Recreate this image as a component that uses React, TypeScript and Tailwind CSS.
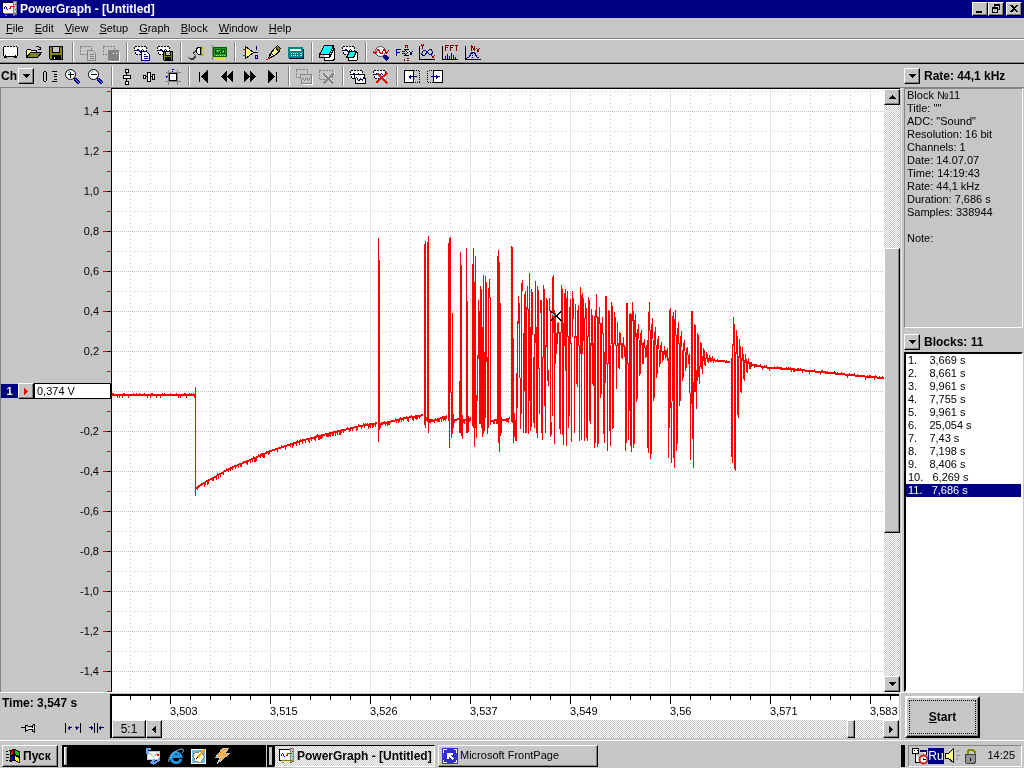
import type { ReactNode } from "react";
import clsx from "clsx";

type Span = [top: number, bottom: number];

const raised =
  "border border-t-white border-l-white border-r-black border-b-black bg-[#c6c6c6] shadow-[inset_-1px_-1px_#808080]";
const dither =
  "bg-[repeating-conic-gradient(#fff_0_25%,#c6c6c6_0_50%)] bg-[length:2px_2px]";

const menus = ["File", "Edit", "View", "Setup", "Graph", "Block", "Window", "Help"];

const yLabels = [
  "1,4", "1,2", "1,0", "0,8", "0,6", "0,4", "0,2", "",
  "-0,2", "-0,4", "-0,6", "-0,8", "-1,0", "-1,2", "-1,4",
];
const xLabels = ["3,503", "3,515", "3,526", "3,537", "3,549", "3,56", "3,571", "3,583"];

const info = [
  "Block №11",
  'Title: ""',
  'ADC: "Sound"',
  "Resolution: 16 bit",
  "Channels: 1",
  "Date: 14.07.07",
  "Time: 14:19:43",
  "Rate: 44,1 kHz",
  "Duration: 7,686 s",
  "Samples: 338944",
];

const blocks = [
  "3,669", "8,661", "9,961", "7,755", "9,961", "25,054",
  "7,43", "7,198", "8,406", "6,269", "7,686",
];

/* ---------- signal ---------- */

// quiet stretches, joined by straight lines
const baseline: [number, number][][] = [
  [[112, 394], [195, 394]],
  [[196, 487], [205, 481], [216, 475], [230, 467], [240, 463], [270, 450], [300, 440], [330, 432], [360, 425], [377, 422]],
  [[380, 423], [400, 418], [423, 414]],
  [[426, 417], [432, 420], [447, 415]],
  [[453, 419], [459, 418]],
  [[463, 419], [471, 417]],
  [[490, 420], [497, 419]],
  [[500, 420], [510, 417]],
  [[709, 359], [730, 361]],
  [[752, 364], [770, 367], [790, 368], [830, 372], [870, 376], [884, 377]],
];

// one [top, bottom] pair for each pixel column
const bursts: { x: number; cols: Span[] }[] = [
  { x: 195, cols: [[387, 495]] },
  { x: 378, cols: [[238, 441], [260, 429]] },
  { x: 424, cols: [[244, 424], [241, 427]] },
  { x: 427, cols: [[242, 420], [236, 432]] },
  { x: 448, cols: [[243, 420], [238, 447], [237, 392], [392, 437], [313, 433], [414, 427]] },
  { x: 459, cols: [[381, 432], [252, 432], [265, 435], [415, 438]] },
  { x: 466, cols: [[248, 432], [301, 432], [416, 431]] },
  {
    x: 472,
    cols: [
      [264, 425], [248, 427], [282, 446], [256, 427], [395, 437], [355, 400],
      [300, 358], [311, 423], [286, 423], [289, 427], [327, 436], [275, 433],
      [352, 430], [276, 417], [282, 361], [357, 433], [288, 427], [279, 297],
      [297, 424],
    ],
  },
  { x: 497, cols: [[256, 423], [250, 442], [262, 451], [303, 435], [417, 432]] },
  {
    x: 511,
    cols: [
      [246, 421], [247, 422], [338, 442], [413, 436], [420, 440], [373, 440],
      [321, 407], [296, 323], [303, 377], [378, 428], [283, 413], [280, 290],
      [333, 432], [294, 390], [291, 432], [307, 432], [286, 309], [309, 433],
      [273, 400], [327, 430], [289, 426], [292, 334], [357, 422], [334, 427],
      [281, 342], [327, 432], [286, 437], [290, 368], [368, 413], [300, 312],
      [300, 432], [357, 439], [285, 357], [289, 405], [345, 432], [298, 346],
      [300, 380], [370, 385], [298, 310], [310, 436], [422, 434], [277, 415],
      [275, 332], [310, 443], [313, 363], [333, 353], [323, 343], [322, 333],
      [332, 428], [332, 433], [285, 332], [289, 434], [323, 444], [293, 345],
      [289, 370], [298, 445], [291, 336], [336, 427], [307, 415], [299, 343],
      [343, 441], [291, 336], [298, 318], [336, 432], [304, 337], [336, 383],
      [310, 386], [305, 345], [345, 440], [287, 353], [295, 439], [293, 353],
      [298, 340], [318, 440], [303, 318], [308, 437], [336, 440], [297, 336],
      [300, 420], [343, 423], [309, 345], [315, 383], [343, 385], [316, 447],
      [310, 442], [294, 317], [316, 446], [317, 443], [307, 323], [323, 397],
      [323, 393], [317, 333], [333, 433], [352, 442], [296, 382], [296, 363],
      [363, 450], [310, 363], [311, 430], [345, 445], [302, 343], [306, 428],
      [343, 427], [312, 343], [317, 345], [345, 388], [322, 345], [343, 367],
      [332, 368], [333, 344], [343, 357], [343, 358], [337, 346], [345, 356],
      [347, 450], [303, 442], [303, 363], [363, 439], [314, 410], [313, 445],
      [314, 451], [302, 320], [311, 447], [320, 443], [314, 336], [333, 401],
      [329, 398], [324, 338], [340, 375], [333, 373], [330, 344], [343, 363],
      [342, 363], [339, 347], [347, 357], [345, 356], [340, 447], [312, 452],
      [302, 330], [330, 458], [324, 453], [318, 338], [340, 400], [332, 397],
      [327, 344], [345, 377], [339, 373], [336, 348], [350, 366], [345, 363],
      [342, 351], [351, 361], [351, 359], [346, 354], [350, 358], [350, 356],
      [348, 360], [358, 457], [310, 427], [308, 407], [402, 462], [316, 400],
      [312, 457], [319, 467], [310, 335], [335, 450], [328, 443], [322, 343],
      [343, 405], [336, 400], [331, 346], [350, 380], [343, 377], [340, 350],
      [352, 370], [348, 367], [347, 354], [355, 363], [353, 392], [393, 459],
      [311, 403], [311, 438], [382, 467], [324, 391], [325, 391], [370, 408],
      [333, 380], [335, 376], [366, 383], [342, 366], [343, 368], [356, 373],
      [348, 360], [350, 364], [358, 365], [352, 358], [354, 361], [358, 362],
      [355, 360], [357, 361], [358, 361], [356, 360],
    ],
  },
  {
    x: 731,
    cols: [
      [358, 456], [344, 462], [317, 345], [324, 468], [352, 470], [330, 353],
      [336, 414], [356, 417], [339, 357], [346, 391], [358, 392], [347, 360],
      [354, 378], [360, 380], [354, 362], [359, 371], [361, 372], [358, 363],
      [362, 368], [362, 368], [362, 366],
    ],
  },
];

function noiseAt(x: number) {
  const n = Math.sin(x * 12.9898) * 43758.5453;
  return n - Math.floor(n);
}

function tracePath() {
  let d = "";
  for (const points of baseline) {
    for (let i = 1; i < points.length; i++) {
      const [x0, y0] = points[i - 1];
      const [x1, y1] = points[i];
      for (let x = x0; x < x1; x++) {
        const y = Math.round(y0 + ((y1 - y0) * (x - x0)) / (x1 - x0));
        const noise = noiseAt(x);
        // the recovering part is rougher than the flat ones
        const rough = y0 > 400 ? 2 : 1;
        const top = noise < 0.2 ? y - 1 : y;
        const bottom = y + 2 + (noise > 0.85 ? rough + 1 : noise > 0.6 ? rough : 0);
        d += `M${x} ${top}V${y0 < 400 && noise < 0.9 ? y + 2 : bottom}`;
      }
    }
  }
  for (const { x, cols } of bursts) {
    cols.forEach(([top, bottom], i) => {
      d += `M${x + i} ${top}V${bottom + 1}`;
    });
  }
  return d;
}

const trace = tracePath();

/* ---------- icons ---------- */

function Pix({ children, className = "h-4 w-4" }: { children: ReactNode; className?: string }) {
  return (
    <svg
      viewBox="0 0 16 16"
      className={clsx("shrink-0 overflow-visible", className)}
      fill="none"
      stroke="#000"
      shapeRendering="crispEdges"
      aria-hidden="true"
    >
      <g transform="translate(.5 .5)">{children}</g>
    </svg>
  );
}

const sheet = (
  <>
    <path d="M0 1H12V9H1Z" fill="#fff" stroke="none" />
    <path d="M0 1H12M0 1V5H1V9H6M12 1V5" strokeDasharray="2 1" />
    <path d="M2 6L3 4H4L5 6L6 7L7 5L8 4L10 6" stroke="#000084" />
  </>
);
const glass = (
  <>
    <circle cx="5" cy="5" r="5" fill="#fff" shapeRendering="auto" />
    <path d="M2 4L4 2" stroke="#00c6c6" />
    <path d="M9 9L14 14M10 9L14 13M9 10L13 14" stroke="#000084" strokeWidth="1.5" />
    <path d="M10 10L14 14" stroke="#8484ff" />
  </>
);
const bars = <path d="M0 0V14H15" />;

const icons: Record<string, ReactNode> = {
  New: (
    <>
      <path d="M1 1H13L14 2V10L13 11V12H11V11H3V12H1V11L0 10V2Z" fill="#fff" />
      <path d="M2 1H13" strokeDasharray="1 2" stroke="#c6c6c6" />
      <path d="M2 9V11M12 9V11" />
    </>
  ),
  Open: (
    <>
      <path d="M0 12V5L1 4H4L5 5H10V7" fill="#ffff84" />
      <path d="M0 12L4 7H15L11 12Z" fill="#848400" />
      <path d="M9 2L10 1H12L14 3M14 1V4H11" />
    </>
  ),
  Save: (
    <>
      <path d="M0 1H13V14H1L0 13Z" fill="#848400" />
      <path d="M3 1H10V7H3Z" fill="#c6c6c6" />
      <path d="M3 10H11V14H3Z" fill="#000" />
      <path d="M5 11V13" stroke="#fff" />
    </>
  ),
  "Copy selection": (
    <>
      <path d="M0 1H11V9H0Z" stroke="#848484" strokeDasharray="2 1" />
      <path d="M7 5H12L15 8V15H7Z" fill="#c6c6c6" stroke="#fff" />
      <path d="M7 5H12L15 8V15H7ZM9 9H13M9 11H13M9 13H13" stroke="#848484" />
    </>
  ),
  "Save selection": (
    <>
      <path d="M0 1H11V9H0Z" stroke="#848484" strokeDasharray="2 1" />
      <path d="M5 5H15V15H6L5 14Z" fill="#848484" stroke="#848484" />
      <path d="M9 8H10M12 8H13M5 16H16V6" stroke="#fff" />
    </>
  ),
  "Copy block": (
    <>
      {sheet}
      <path d="M7 6H12L15 9V15H7Z" fill="#fff" stroke="#000084" />
      <path d="M9 9H11M9 11H13M9 13H13" stroke="#000084" />
    </>
  ),
  "Save block": (
    <>
      {sheet}
      <path d="M6 6H15V15H7L6 14Z" fill="#848400" />
      <path d="M8 6H13V10H8Z" fill="#c6c6c6" />
      <path d="M8 12H13V15H8Z" fill="#000" />
    </>
  ),
  Connect: (
    <>
      <path d="M9 2H12V9H10L8 7V4Z" fill="#fff" />
      <path d="M12 1H13V10" stroke="#848484" />
      <path d="M14 1V4M14 7V10" stroke="#c6c600" strokeWidth="2" />
      <path d="M8 5L6 6L5 8L7 10V12L5 14H2L0 12M1 13H5L6 11" stroke="#424242" />
    </>
  ),
  Board: (
    <>
      <path d="M2 2H15V11H2Z" fill="#219c21" stroke="#006300" />
      <path d="M0 0H1V14" stroke="#848484" />
      <path d="M4 4H8V8H4ZM10 4H13V8H10Z" stroke="#004200" />
      <path d="M5 5H8M11 6H13M4 10H13" stroke="#84ff84" strokeDasharray="1 1" />
      <path d="M4 13H13" stroke="#e7e700" strokeWidth="2" strokeDasharray="4 1" />
    </>
  ),
  Amplifier: (
    <>
      <path d="M3 1L11 7L3 13Z" fill="#ffff84" />
      <path d="M0 4H3M0 10H3" stroke="#c60000" />
      <path d="M11 7H15" />
      <path d="M14 0V4M13 10H15V13H13Z" stroke="#000084" />
    </>
  ),
  Pen: (
    <>
      <path d="M10 2L14 6L9 10L5 12L4 9Z" fill="#ffff84" />
      <path d="M12 0L15 3L13 6L10 2Z" fill="#848400" />
      <path d="M6 8L8 10L4 13L3 12Z" fill="#fff" />
      <path d="M0 14H2L4 12" stroke="#ff0000" />
    </>
  ),
  Calculator: (
    <>
      <path d="M0 2H14V12H0Z" fill="#008484" stroke="#008484" />
      <path d="M2 4H12V5H2Z" fill="#fff" stroke="#fff" />
      <path d="M0 13H15V3" stroke="#000042" />
      <path d="M2 8H9M2 10H9" stroke="#fff" strokeDasharray="1 1" />
      <path d="M11 8H13M11 10H13" stroke="#84ffff" />
    </>
  ),
  Clear: (
    <>
      <path d="M9 3H15V14L13 15H5V12" fill="#fff" />
      <path d="M5 0H14L10 9H0Z" fill="#00ffff" />
      <path d="M0 9V12H10L14 4V0M10 9V12" fill="none" />
    </>
  ),
  "Clear block": (
    <>
      {sheet}
      <path d="M10 7H15V14L14 15H6V12" fill="#fff" />
      <path d="M7 6H14L11 12H4Z" fill="#00ffff" />
    </>
  ),
  Inspect: (
    <>
      <circle cx="7" cy="6" r="5" fill="#fff" stroke="#424242" shapeRendering="auto" />
      <path d="M11 10L15 14M10 11L14 15M12 10L15 13" stroke="#000084" strokeWidth="1.5" />
      <path d="M-1 6H0L1 8L3 7L4 4H5L7 8H9L10 4H11L13 8L15 5" stroke="#c60000" />
    </>
  ),
  Formula: (
    <>
      <path d="M0 10V4H4M0 7H3M5 6H8M5 8H8M13 6L16 10M16 6L13 10" stroke="#000084" />
      <path d="M12 4H8L11 7L8 10H12" />
      <path d="M9 2V0H11V2M8 13V15M10 13H12M10 15H12" stroke="#840000" />
    </>
  ),
  "X-Y plot": (
    <>
      {bars}
      <path d="M2 -1L3 1L4 -1M3 1V3M12 10L15 13M15 10L12 13" stroke="#840000" />
      <path d="M12 4H10L8 6L5 10H3L2 8L4 5H6L10 9H12L13 7Z" stroke="#000084" />
    </>
  ),
  FFT: (
    <>
      {bars}
      <path d="M3 5V0H6M3 2H5M8 5V0H11M8 2H10M12 0H15M14 0V5" stroke="#840000" />
      <path d="M3 13V10M5 13V8M7 13V10M9 13V7M11 13V9M13 13V11" stroke="#000084" />
    </>
  ),
  Histogram: (
    <>
      {bars}
      <path d="M6 5V0L9 5V0M11 3L14 7M14 3L11 7" stroke="#840000" />
      <path d="M1 13L4 11L6 7H9L11 11L14 13" stroke="#000084" />
      <path d="M7 7V13" stroke="#000084" strokeDasharray="1 1" />
    </>
  ),
  "Zero level": (
    <path d="M1 3L2 2H3L4 3V11L3 12H2L1 11ZM9 2H14M11 5H14M11 7H14M9 12H14M11 10H14" />
  ),
  "Zoom in": (
    <>
      {glass}
      <path d="M2 5H8M5 2V8" />
    </>
  ),
  "Zoom out": (
    <>
      {glass}
      <path d="M2 5H8" />
    </>
  ),
  "Fit vertically": (
    <path d="M6 0H9V3H6ZM4 6H11V9H4ZM6 12H9V15H6ZM7 3V6M7 9V12" fill="#fff" />
  ),
  "Fit horizontally": (
    <path d="M1 6H3V9H1ZM5 3H8V12H5ZM10 5H12V10H10ZM0 7H1M3 7H5M8 7H10" fill="#fff" />
  ),
  "Fit all": (
    <>
      <path d="M0 3H15M0 12H15M3 0V15M12 0V15" stroke="#848484" />
      <path d="M4 4H11V11H4Z" fill="#fff" />
      <path d="M6 0H8M7 1V2M0 7H2M1 6V8" stroke="#0000c6" />
    </>
  ),
  First: <path d="M3 2V12M11 2V12L6 7Z" fill="#000" strokeWidth="1.5" />,
  Previous: <path d="M7 2V12L2 7ZM13 2V12L8 7Z" fill="#000" />,
  Next: <path d="M2 2V12L7 7ZM8 2V12L13 7Z" fill="#000" />,
  Last: <path d="M3 2V12L8 7ZM11 2V12" fill="#000" strokeWidth="1.5" />,
  "Copy to block": (
    <g stroke="#848484">
      <path d="M0 0H11V8H0Z" strokeDasharray="2 1" />
      <path d="M4 5H15V14H5Z" fill="#c6c6c6" />
      <path d="M6 8L8 11L10 8L12 11L14 8" />
      <path d="M6 15H16V6" stroke="#fff" />
    </g>
  ),
  "Delete selection": (
    <g stroke="#848484">
      <path d="M0 1H13V10H0Z" strokeDasharray="2 1" />
      <path d="M6 4L15 13M4 15L15 4" stroke="#fff" />
      <path d="M4 4L14 14M14 4L4 14" strokeWidth="2" />
    </g>
  ),
  "Duplicate block": (
    <>
      {sheet}
      <path d="M4 5H14V9H15V14H5V9H4Z" fill="#fff" />
      <path d="M6 8L8 11H9L10 9L12 11L13 8" stroke="#000084" />
    </>
  ),
  "Delete block": (
    <>
      {sheet}
      <path d="M4 4L14 14M14 3L3 13" stroke="#ff0000" strokeWidth="2" />
    </>
  ),
  "Move left": (
    <>
      <path d="M0 1H9V13H0Z" fill="#fff" />
      <path d="M9 1H15V13H9" strokeDasharray="1 1" />
      <path d="M4 7H12M6 5V9M5 6V8" stroke="#000084" />
    </>
  ),
  "Move right": (
    <>
      <path d="M6 1H15V13H6Z" fill="#fff" />
      <path d="M6 1H0V13H6" strokeDasharray="1 1" />
      <path d="M3 7H12M9 5V9M10 6V8" stroke="#000084" />
    </>
  ),
};

const mainTools = [
  ["New", "Open", "Save"],
  ["Copy selection", "Save selection"],
  ["Copy block", "Save block"],
  ["Connect", "Board"],
  ["Amplifier", "Pen", "Calculator"],
  ["Clear", "Clear block"],
  ["Inspect", "Formula", "X-Y plot", "FFT", "Histogram"],
];
const viewTools = [
  ["Zero level", "Zoom in", "Zoom out"],
  ["Fit vertically", "Fit horizontally", "Fit all"],
  ["First", "Previous", "Next", "Last"],
  ["Copy to block", "Delete selection"],
  ["Duplicate block", "Delete block"],
  ["Move left", "Move right"],
];

function Tools({ groups }: { groups: string[][] }) {
  return (
    <div className="flex items-center">
      {groups.map((names, i) => (
        <div key={i} className="flex items-center">
          {i > 0 && (
            <span className="mx-[3px] h-5 w-0.5 border-r border-l border-r-white border-l-[#848484]" />
          )}
          {names.map((name) => (
            <button key={name} aria-label={name} className="h-[22px] w-[23px] pt-0.5 pl-[3px]">
              <Pix>{icons[name]}</Pix>
            </button>
          ))}
        </div>
      ))}
    </div>
  );
}

type Direction = "up" | "down" | "left" | "right";
const arrows: Record<Direction, string> = {
  up: "M7 5H8V6H9V7H10V8H11V9H4V8H5V7H6V6H7Z",
  down: "M4 5H11V6H10V7H9V8H8V9H7V8H6V7H5V6H4Z",
  left: "M9 4V11H8V10H7V9H6V8H5V7H6V6H7V5H8V4Z",
  right: "M5 4H6V5H7V6H8V7H9V8H8V9H7V10H6V11H5Z",
};

function ArrowButton({
  dir,
  label,
  fill = "#000",
  className = "h-4",
}: {
  dir: Direction;
  label: string;
  fill?: string;
  className?: string;
}) {
  return (
    <button
      aria-label={label}
      className={clsx("flex w-4 shrink-0 items-center justify-center", className, raised)}
    >
      <svg
        viewBox="0 0 14 14"
        className="h-3.5 w-3.5 shrink-0"
        shapeRendering="crispEdges"
        aria-hidden="true"
      >
        <path d={arrows[dir]} fill={fill} />
      </svg>
    </button>
  );
}

function AppIcon() {
  return (
    <Pix>
      <path d="M0 1H11V12H0Z" fill="#fff" />
      <path d="M11 0H14V13H11Z" fill="#c6c6c6" stroke="#848484" />
      <path d="M1 8L3 5L5 8L6 9" stroke="#0000ff" />
      <path d="M6 7H8V5H12" stroke="#ff0000" />
      <path d="M12 3H13" stroke="#ff0000" />
      <path d="M12 8H13" stroke="#00c600" />
      <path d="M2 14H4M10 14H12M1 12H13" stroke="#848400" />
    </Pix>
  );
}

/* ---------- window parts ---------- */

function TitleBar() {
  const glyphs: [string, string][] = [
    ["Minimize", "M3 8H9V10H3Z"],
    ["Restore", "M5 1H11V7H9V6H10V3H6V4H5ZM3 4H9V10H3ZM4 6V9H8V6Z"],
    ["Close", "M3 2H5L7 4L9 2H11L8 5.5L11 9H9L7 7L5 9H3L6 5.5Z"],
  ];
  return (
    <header className="flex h-[18px] items-center bg-[#000084] px-0.5 text-white">
      <AppIcon />
      <h1 className="ml-0.5 flex-1 text-[12px] font-bold">PowerGraph - [Untitled]</h1>
      {glyphs.map(([label, d]) => (
        <button
          key={label}
          aria-label={label}
          className={clsx("flex h-3.5 w-4 items-center justify-center last:ml-0.5", raised)}
        >
          <svg viewBox="0 0 14 12" className="h-3 w-3.5" shapeRendering="crispEdges" aria-hidden="true">
            <path d={d} fillRule="evenodd" />
          </svg>
        </button>
      ))}
    </header>
  );
}

function Axis() {
  return (
    <div className="relative flex w-[111px] shrink-0 flex-col border-l border-[#848484] pt-[3px]">
      <svg className="absolute inset-y-0 right-0 h-full w-2" shapeRendering="crispEdges" aria-hidden="true">
        <defs>
          <pattern id="axis-ticks" y="3" width="8" height="40" patternUnits="userSpaceOnUse">
            <rect x="4" width="4" height="1" fill="#ff0000" />
            <rect y="20" width="4" height="1" fill="#ff0000" />
            <rect x="4" y="20" width="4" height="1" fill="#000" />
          </pattern>
        </defs>
        <rect width="8" height="100%" fill="url(#axis-ticks)" />
      </svg>
      {yLabels.map((label) =>
        label ? (
          <div key={label} className="flex h-10 items-center justify-end pr-3">
            {label}
          </div>
        ) : (
          <div key="level" className="relative flex h-10 items-center">
            <span className="flex h-3.5 w-[17px] items-center justify-center bg-[#000084] font-bold text-white">
              1
            </span>
            <ArrowButton dir="right" label="Channel 1" fill="#ff0000" />
            <input
              aria-label="Level"
              defaultValue="0,374 V"
              className="h-4 min-w-0 flex-1 border border-black bg-white px-0.5"
            />
          </div>
        ),
      )}
    </div>
  );
}

function Plot() {
  return (
    <div className="relative min-w-0 flex-1 border-t border-l border-black bg-white">
      <svg className="absolute inset-0 h-full w-full" shapeRendering="crispEdges" role="img" aria-label="Signal">
        <defs>
          <pattern id="minor-v" x="18" y="2" width="20" height="4" patternUnits="userSpaceOnUse">
            <rect width="1" height="1" fill="#c0c0c0" />
          </pattern>
          <pattern id="minor-h" x="18" y="2" width="4" height="20" patternUnits="userSpaceOnUse">
            <rect width="1" height="1" fill="#c0c0c0" />
          </pattern>
          <pattern id="major-v" x="58" width="100" height="2" patternUnits="userSpaceOnUse">
            <rect width="1" height="1" fill="#c0c0c0" />
          </pattern>
          <pattern id="major-h" y="22" width="2" height="40" patternUnits="userSpaceOnUse">
            <rect width="1" height="1" fill="#c0c0c0" />
          </pattern>
        </defs>
        <rect width="100%" height="100%" fill="url(#minor-v)" />
        <rect width="100%" height="100%" fill="url(#minor-h)" />
        <rect width="100%" height="100%" fill="url(#major-v)" />
        <rect width="100%" height="100%" fill="url(#major-h)" />
        <g transform="translate(-111.5 -89)">
          <path d={trace} fill="none" stroke="#ff0000" className="mix-blend-multiply" />
          <path d="M550 311L555 316M550 321L553 318M561 311L556 316H553M556 316L561 321" fill="none" stroke="#000" />
          <path d="M551 313L554 316" fill="none" stroke="#00ffff" />
        </g>
      </svg>
    </div>
  );
}

function Ruler() {
  return (
    <div className="h-6 overflow-hidden bg-white">
      <svg className="block h-2 w-full" shapeRendering="crispEdges" aria-hidden="true">
        <defs>
          <pattern id="ruler-minor" x="18" width="20" height="8" patternUnits="userSpaceOnUse">
            <rect width="1" height="4" />
          </pattern>
          <pattern id="ruler-major" x="58" width="100" height="8" patternUnits="userSpaceOnUse">
            <rect width="1" height="8" />
          </pattern>
        </defs>
        <rect width="100%" height="8" fill="url(#ruler-minor)" />
        <rect width="100%" height="8" fill="url(#ruler-major)" />
      </svg>
      <div className="flex pl-[58px] leading-[14px]">
        {xLabels.map((label) => (
          <span key={label} className="w-[100px] shrink-0">
            {label}
          </span>
        ))}
      </div>
    </div>
  );
}

function SidePanel() {
  return (
    <aside className="flex w-[120px] shrink-0 flex-col pr-px">
      <div className="h-60 border border-t-[#848484] border-r-white border-b-white border-l-[#848484] px-0.5 leading-[13px]">
        {info.map((line) => (
          <p key={line}>{line}</p>
        ))}
        <p className="mt-[13px]">Note:</p>
      </div>
      <div className="flex h-6 items-center gap-1 pt-1">
        <ArrowButton dir="down" label="Blocks menu" />
        <h2 className="text-[12px] font-bold">Blocks: 11</h2>
      </div>
      <ul className="flex-1 border-2 border-t-black border-r-white border-b-white border-l-black bg-white leading-[13px]">
        {blocks.map((value, i) => (
          <li
            key={i}
            className={clsx(
              "px-0.5 whitespace-pre",
              i === blocks.length - 1 && "bg-[#000084] text-white",
            )}
          >
            {`${i + 1}.${i < 9 ? "    " : "   "}${value} s`}
          </li>
        ))}
      </ul>
    </aside>
  );
}

function Taskbar() {
  return (
    <footer className="flex h-7 items-center border-t border-white pt-0.5 pl-0.5">
      <button className={clsx("flex h-[22px] w-14 items-center gap-0.5 px-0.5 text-[12px] font-bold", raised)}>
        <Pix>
          <path d="M0 3H2M0 6H3M0 9H3M0 12H2M3 2H5M3 12H5" />
          <path d="M5 2L8 1V6L5 7Z" fill="#ff0000" stroke="#000" />
          <path d="M9 1L14 3V8L9 6Z" fill="#00c600" stroke="#000" />
          <path d="M5 8L8 7V12L5 13Z" fill="#0000ff" stroke="#000" />
          <path d="M9 7L14 9V14L9 12Z" fill="#ffff00" stroke="#000" />
        </Pix>
        Пуск
      </button>
      <nav className="ml-1 flex h-[22px] w-[204px] items-center bg-black pl-0.5" aria-label="Quick launch">
        <span className="h-[18px] w-[3px] border border-t-white border-r-[#848484] border-b-[#848484] border-l-white bg-[#c6c6c6]" />
        <div className="ml-[78px] flex gap-[7px]">
          <a href="#outlook" aria-label="Outlook Express">
            <Pix>
              <path d="M2 3H14V11H2Z" fill="#fff" stroke="#c6c6c6" />
              <path d="M3 4L8 8L13 4" stroke="#c6c6a5" />
              <path d="M11 5H13V7H11Z" fill="#ff0000" stroke="none" />
              <path d="M5 0H3L1 2V4M0 4H3M1 1L4 0M13 9V12L10 14H7M9 11L6 14L9 16" stroke="#63a5ff" strokeWidth="2" />
            </Pix>
          </a>
          <a href="#explorer" aria-label="Internet Explorer">
            <svg viewBox="0 0 16 16" className="h-4 w-4" fill="none" aria-hidden="true">
              <path d="M13 11A5 5 0 1 1 13 8.500H4" stroke="#2194de" strokeWidth="3" />
              <path d="M1 14C-1 10 8 1 14 1C16 1 16 3 14 5" stroke="#84c6ff" />
            </svg>
          </a>
          <a href="#desktop" aria-label="Show desktop">
            <Pix>
              <path d="M0 1H14V15H0Z" fill="#6bbde7" stroke="#fff" />
              <path d="M2 5L9 3L13 8L9 14L3 13Z" fill="#ffffde" stroke="#848484" />
              <path d="M6 9L13 1" stroke="#ff9c00" strokeWidth="2" />
              <path d="M4 11L6 9" />
            </Pix>
          </a>
          <a href="#winamp" aria-label="Winamp">
            <Pix>
              <path d="M8 0H14L10 5H15L3 15L6 9H1Z" fill="#ff9c21" stroke="#c6c6c6" />
              <path d="M10 2L6 7H9L6 11" stroke="#ffbd5a" strokeWidth="2" />
            </Pix>
          </a>
        </div>
      </nav>
      <div className="ml-px flex h-[22px] w-[7px] items-center justify-center bg-black">
        <span className="h-[18px] w-[3px] bg-[#c6c6c6]" />
      </div>
      <button
        className={clsx(
          "flex h-[22px] w-[161px] items-center gap-0.5 border border-t-black border-r-white border-b-white border-l-black px-1 text-[12px] font-bold whitespace-nowrap",
          dither,
        )}
      >
        <AppIcon />
        PowerGraph - [Untitled]
      </button>
      <button className={clsx("ml-[3px] flex h-[22px] w-[160px] items-center gap-0.5 px-[3px]", raised)}>
        <Pix>
          <path d="M0 0H15V15H0Z" fill="#3131ce" stroke="#3131ce" />
          <path d="M5 10V5H10M5 5L11 11" stroke="#fff" strokeWidth="2" />
          <path d="M1 4V1H4M11 1H14V4M14 11V14H11M4 14H1V11" stroke="#fff" />
        </Pix>
        Microsoft FrontPage
      </button>
      <span className="ml-auto h-[22px] w-1 bg-black" />
      <div className="mr-0.5 ml-[3px] flex h-[22px] w-[114px] items-center border border-t-[#848484] border-r-white border-b-white border-l-[#848484] pl-[3px]">
        <Pix>
          <path d="M0 0H6V5H0ZM3 5V14H10M7 2H14V6" fill="#fff" />
          <path d="M7 2H14" stroke="#000084" strokeWidth="2" />
          <path d="M1 2H2M4 2H5" />
          <circle cx="11" cy="11" r="4" fill="#fff" stroke="#ce2121" strokeWidth="2" shapeRendering="auto" />
          <path d="M11 9V11H13" />
        </Pix>
        <span className="flex h-4 w-4 items-center justify-center bg-[#000084] text-[12px] text-white">
          Ru
        </span>
        <Pix>
          <path d="M1 5H4L9 0V14L4 10H1Z" fill="#ffff84" />
          <path d="M12 4L14 2M12 7H15M12 10L14 12" stroke="#848484" />
        </Pix>
        <Pix className="ml-0.5 h-4 w-4">
          <path d="M5 7V3L7 1H10L12 3V7" stroke="#848400" strokeWidth="2" />
          <path d="M3 6H13V14L11 15H4L3 14Z" fill="#949494" stroke="#424242" />
          <path d="M8 9V12" />
        </Pix>
        <time className="mr-1.5 ml-auto">14:25</time>
      </div>
    </footer>
  );
}

export default function App() {
  return (
    <div className="flex min-h-screen flex-col overflow-hidden bg-[#c6c6c6] font-['Liberation_Sans',Arial,sans-serif] text-[11px] leading-none text-black">
      <TitleBar />
      <nav className="flex h-[21px] items-center border-b border-[#848484] pl-px">
        {menus.map((name) => (
          <button key={name} className="pr-1.5 pl-[5px]">
            <span className="underline">{name[0]}</span>
            {name.slice(1)}
          </button>
        ))}
      </nav>
      <div className="flex h-[25px] items-center border-t border-b border-t-white border-b-black shadow-[inset_0_-1px_#848484]">
        <Tools groups={mainTools} />
      </div>
      <div className="flex h-6 items-center justify-between border-b border-[#848484]">
        <div className="flex items-center">
          <div className="flex w-[39px] items-center gap-px pl-px text-[12px] font-bold">
            Ch
            <ArrowButton dir="down" label="Channel" />
          </div>
          <Tools groups={viewTools} />
        </div>
        <div className="flex w-[120px] items-center gap-1">
          <ArrowButton dir="down" label="Block info menu" />
          <h2 className="text-[12px] font-bold whitespace-nowrap">Rate: 44,1 kHz</h2>
        </div>
      </div>

      <main className="flex flex-1">
        <div className="flex min-w-0 flex-1">
          <Axis />
          <Plot />
          <div className={clsx("flex w-4 shrink-0 flex-col border-t border-black", dither)}>
            <ArrowButton dir="up" label="Scroll up" />
            <span className="flex-[143]" />
            <span className={clsx("flex-[284]", raised)} />
            <span className="flex-[144]" />
            <ArrowButton dir="down" label="Scroll down" />
          </div>
        </div>
        <div className="ml-px w-[3px] border-l border-[#e7e7e7]" />
        <SidePanel />
      </main>

      <section className="flex h-12 border-t border-white">
        <div className="flex w-[110px] shrink-0 flex-col justify-between pt-1 pb-1">
          <p className="pl-0.5 text-[12px] font-bold">Time: 3,547 s</p>
          <div className="flex items-center pl-5">
            <button aria-label="Pin">
              <Pix>
                <path d="M0 7H5M5 4V11M5 5H7L8 6H12M5 10H7L8 9H12M14 3V12M12 4V11M14 4H12M14 11H12" />
                <path d="M6 8H12" stroke="#fff" />
              </Pix>
            </button>
            <button aria-label="Expand time scale" className="ml-7">
              <Pix>
                <path d="M1 2V12M16 2V12" />
                <path d="M3 7H7M10 7H14M5 5V9M4 6V8M12 5V9M13 6V8" stroke="#000084" />
              </Pix>
            </button>
            <button aria-label="Compress time scale" className="ml-2">
              <Pix>
                <path d="M6 2V12M9 2V12" />
                <path d="M0 7H4M11 7H15M3 5V9M4 6V8M12 5V9M11 6V8" stroke="#000084" />
              </Pix>
            </button>
          </div>
        </div>
        <div className="flex min-w-0 flex-1 flex-col pt-px">
          <div className="border-t-2 border-l-2 border-t-black border-l-black">
            <Ruler />
            <div className={clsx("flex h-[18px]", dither)}>
              <button className={clsx("w-[34px] text-[12px]", raised)}>5:1</button>
              <ArrowButton dir="left" label="Scroll left" className="h-full" />
              <span className="flex-[685]" />
              <span className={clsx("w-2", raised)} />
              <span className="flex-[28]" />
              <ArrowButton dir="right" label="Scroll right" className="h-full" />
            </div>
          </div>
        </div>
        <div className="ml-px w-[124px] border-l border-[#e7e7e7] pt-[3px] pl-1">
          <button className="h-[42px] w-[75px] border-2 border-t-white border-r-black border-b-black border-l-white p-0.5 text-[12px] font-bold shadow-[inset_-1px_-1px_#808080]">
            <span className="flex h-full items-center justify-center border border-dotted border-black">
              <span className="underline">S</span>tart
            </span>
          </button>
        </div>
      </section>
      <Taskbar />
    </div>
  );
}
